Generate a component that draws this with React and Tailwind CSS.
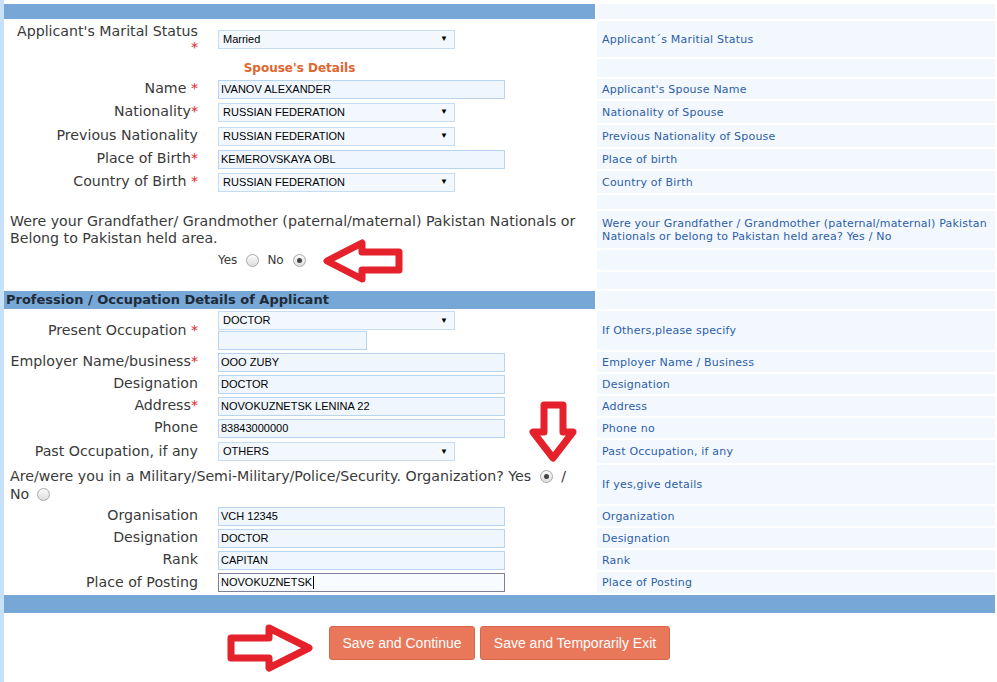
import React from "react";

const label = "font-['DejaVu_Sans',sans-serif] text-[14.2px] text-[#3a3a3a]";
const ctl = "font-['Liberation_Sans',Arial,sans-serif] text-[11px] text-black";

function Star() {
  return <span className="text-[#e3232b]">*</span>;
}

function Select({ value }) {
  return (
    <div className={`flex h-[19px] w-[237px] items-center justify-between border border-[#c8dcef] bg-[#f3f8fe] pl-[4px] pr-[6px] ${ctl}`}>
      <span>{value}</span>
      <span className="text-[8px] leading-none">▼</span>
    </div>
  );
}

function Input({ value, short, focus }) {
  return (
    <div
      className={`flex h-[19px] items-center border pl-[2px] ${ctl} ${short ? "w-[149px]" : "w-[287px]"} ${
        focus ? "border-[#7d8197] bg-[#f8fbff]" : "border-[#b9d4ee] bg-[#eff6fe]"
      }`}
    >
      <span>{value}</span>
      {focus && <span className="ml-[1px] h-[13px] w-[1px] bg-black" />}
    </div>
  );
}

function Radio({ checked }) {
  return (
    <span className="inline-flex h-[13px] w-[13px] items-center justify-center rounded-full border border-[#a9a9a9] bg-linear-to-b from-[#fafafa] to-[#dedede] align-middle">
      {checked && <span className="h-[5px] w-[5px] rounded-full bg-[#444]" />}
    </span>
  );
}

function Row({ h, children, note, leftClass = "" }) {
  return (
    <div className={`flex gap-[2px] ${h}`}>
      <div className={`flex w-[591px] items-center ${leftClass}`}>{children}</div>
      <div className="flex w-[398px] items-center overflow-hidden whitespace-nowrap bg-[#f3f8ff] pl-[5px] font-['DejaVu_Sans',sans-serif] text-[11px] leading-[13px] tracking-[0.2px] text-[#2d5ea6]">
        {note}
      </div>
    </div>
  );
}

function Field({ h, name, note, children, top }) {
  return (
    <Row h={h} note={note}>
      <div className={`w-[194px] shrink-0 text-right ${label} ${top ? "leading-[16px]" : ""}`}>{name}</div>
      <div className="flex flex-col gap-[1px] pl-[20px]">{children}</div>
    </Row>
  );
}

function Arrows() {
  const red = "#e5212b";
  return (
    <svg className="pointer-events-none absolute left-0 top-0" width="997" height="682" viewBox="0 0 997 682">
      <polygon
        points="327,261 362,243 362,252 399,252 399,270 362,270 362,279"
        fill="none"
        stroke={red}
        strokeWidth="7"
        strokeLinejoin="round"
      />
      <polygon
        points="544,405 563,405 563,432 573,432 553,458 533,432 544,432"
        fill="none"
        stroke={red}
        strokeWidth="7"
        strokeLinejoin="round"
      />
      <polygon
        points="231,638 269,638 269,628 309,648 269,668 269,658 231,658"
        fill="none"
        stroke={red}
        strokeWidth="7"
        strokeLinejoin="round"
      />
    </svg>
  );
}

export default function App() {
  return (
    <div className="relative flex h-[682px] w-[997px] overflow-hidden bg-white">
      <div className="w-[4px] shrink-0 bg-[#c8e1fa]" />
      <div className="flex w-[991px] flex-col gap-[2px] pt-[4px]">
        <Row h="h-[15px]" leftClass="bg-[#76a7d6]" />

        <Field h="h-[36px]" top name={<>Applicant's Marital Status<br /><Star /></>} note="Applicant´s Maritial Status">
          <Select value="Married" />
        </Field>

        <Row h="h-[18px]" leftClass="justify-center">
          <span className="font-['DejaVu_Sans',sans-serif] text-[12px] font-bold text-[#e0652e]">Spouse's Details</span>
        </Row>

        <Field h="h-[20px]" name={<>Name <Star /></>} note="Applicant's Spouse Name">
          <Input value="IVANOV ALEXANDER" />
        </Field>
        <Field h="h-[22px]" name={<>Nationality<Star /></>} note="Nationality of Spouse">
          <Select value="RUSSIAN FEDERATION" />
        </Field>
        <Field h="h-[22px]" name="Previous Nationality" note="Previous Nationality of Spouse">
          <Select value="RUSSIAN FEDERATION" />
        </Field>
        <Field h="h-[20px]" name={<>Place of Birth<Star /></>} note="Place of birth">
          <Input value="KEMEROVSKAYA OBL" />
        </Field>
        <Field h="h-[22px]" name={<>Country of Birth <Star /></>} note="Country of Birth">
          <Select value="RUSSIAN FEDERATION" />
        </Field>

        <Row h="h-[14px]" />

        <Row
          h="h-[37px]"
          note={
            <span>
              Were your Grandfather / Grandmother (paternal/maternal) Pakistan
              <br />
              Nationals or belong to Pakistan held area? Yes / No
            </span>
          }
        >
          <p className={`pl-[6px] leading-[17px] ${label}`}>
            Were your Grandfather/ Grandmother (paternal/maternal) Pakistan Nationals or
            <br />
            Belong to Pakistan held area.
          </p>
        </Row>

        <Row h="h-[20px]">
          <div className="flex items-center pl-[214px] font-['DejaVu_Sans',sans-serif] text-[12px] text-[#3a3a3a]">
            <span>Yes</span>
            <span className="ml-[9px]"><Radio /></span>
            <span className="ml-[8px]">No</span>
            <span className="ml-[9px]"><Radio checked /></span>
          </div>
        </Row>

        <Row h="h-[17px]" />

        <Row h="h-[18px]" leftClass="bg-[#76a7d6]">
          <span className="pl-[2px] font-['DejaVu_Sans',sans-serif] text-[13px] font-bold text-[#1f2a36]">
            Profession / Occupation Details of Applicant
          </span>
        </Row>

        <Field h="h-[39px]" name={<>Present Occupation <Star /></>} note="If Others,please specify">
          <Select value="DOCTOR" />
          <Input value="" short />
        </Field>
        <Field h="h-[20px]" name={<>Employer Name/business<Star /></>} note="Employer Name / Business">
          <Input value="OOO ZUBY" />
        </Field>
        <Field h="h-[20px]" name="Designation" note="Designation">
          <Input value="DOCTOR" />
        </Field>
        <Field h="h-[20px]" name={<>Address<Star /></>} note="Address">
          <Input value="NOVOKUZNETSK LENINA 22" />
        </Field>
        <Field h="h-[20px]" name="Phone" note="Phone no">
          <Input value="83843000000" />
        </Field>
        <Field h="h-[23px]" name="Past Occupation, if any" note="Past Occupation, if any">
          <Select value="OTHERS" />
        </Field>

        <Row h="h-[39px]" note="If yes,give details">
          <p className={`pl-[6px] leading-[18px] ${label}`}>
            Are/were you in a Military/Semi-Military/Police/Security. Organization? Yes{" "}
            <span className="mx-[4px]"><Radio checked /></span> /
            <br />
            No <span className="ml-[3px]"><Radio /></span>
          </p>
        </Row>

        <Field h="h-[20px]" name="Organisation" note="Organization">
          <Input value="VCH 12345" />
        </Field>
        <Field h="h-[20px]" name="Designation" note="Designation">
          <Input value="DOCTOR" />
        </Field>
        <Field h="h-[20px]" name="Rank" note="Rank">
          <Input value="CAPITAN" />
        </Field>
        <Field h="h-[21px]" name="Place of Posting" note="Place of Posting">
          <Input value="NOVOKUZNETSK" focus />
        </Field>

        <div className="h-[18px] bg-[#76a7d6]" />

        <div className="mt-[11px] flex justify-center gap-[5px] font-['Liberation_Sans',Arial,sans-serif] text-[14px] text-white">
          <button className="h-[34px] w-[146px] rounded-[3px] border border-[#d9664a] bg-[#e9785a]">Save and Continue</button>
          <button className="h-[34px] w-[190px] rounded-[3px] border border-[#d9664a] bg-[#e9785a]">Save and Temporarily Exit</button>
        </div>
      </div>
      <Arrows />
    </div>
  );
}
